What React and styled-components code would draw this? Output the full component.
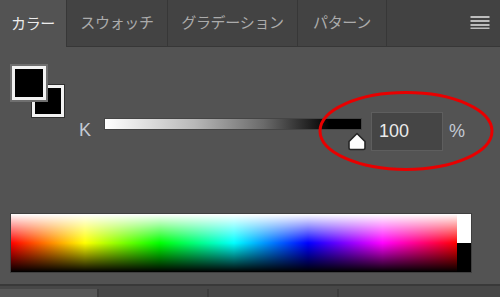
import React from "react";
import styled, { createGlobalStyle } from "styled-components";

const GlobalStyle = createGlobalStyle`
    html, body {
        margin: 0;
        padding: 0;
        background: #535353;
        width: 500px;
        height: 297px;
        overflow: hidden;
    }
`;

const Panel = styled.div`
    position: relative;
    width: 500px;
    height: 297px;
    display: flex;
    flex-direction: column;
    background: #535353;
    font-family: "Noto Sans CJK JP", "Liberation Sans", sans-serif;
`;

const TabBar = styled.div`
    height: 47px;
    display: flex;
    background: #424242;
    flex-shrink: 0;
`;

const Tab = styled.div`
    width: ${({ w }) => w}px;
    box-sizing: border-box;
    display: flex;
    align-items: center;
    justify-content: center;
    padding-bottom: 3px;
    font-size: 15px;
    letter-spacing: -0.3px;
    color: ${({ active }) => (active ? "#ececec" : "#ababab")};
    background: ${({ active }) => (active ? "#535353" : "#434343")};
    border-right: 1px solid #373737;
    border-bottom: ${({ active }) => (active ? "none" : "1px solid #373737")};
`;

const TabFill = styled.div`
    flex: 1;
    display: flex;
    align-items: center;
    justify-content: flex-end;
    padding: 0 10px 3px 0;
    border-bottom: 1px solid #373737;
`;

const Body = styled.div`
    flex: 1;
    display: flex;
    flex-direction: column;
    padding: 16px 0 0 10px;
`;

const Controls = styled.div`
    display: grid;
    grid-template-columns: 54px auto;
    grid-template-rows: 49px 39px;
`;

const Swatches = styled.div`
    grid-row: 1 / 3;
    grid-column: 1;
    position: relative;
    width: 54px;
    height: 55px;
`;

const Square = styled.div`
    position: absolute;
    left: ${({ x }) => x}px;
    top: ${({ y }) => y}px;
    width: ${({ size }) => size}px;
    height: ${({ size }) => size}px;
    box-sizing: border-box;
    background: #000;
    border: ${({ front }) => (front ? "3px" : "3px")} solid #f2f2f2;
    box-shadow: 0 0 0 ${({ front }) => (front ? "2px #6f6f6f" : "1px #303030")};
`;

const SliderRow = styled.div`
    grid-row: 2;
    grid-column: 2;
    display: flex;
    align-items: flex-start;
    padding-left: 15px;
`;

const Label = styled.span`
    font-family: "Liberation Sans", Arial, sans-serif;
    font-size: 18px;
    color: ${({ dim }) => (dim ? "#c4cad4" : "#d4d4d4")};
    line-height: 39px;
    margin-top: ${({ drop }) => drop || 0}px;
`;

const Slider = styled.div`
    position: relative;
    width: 256px;
    height: 39px;
    margin-left: 14px;
`;

const Track = styled.div`
    position: absolute;
    left: 0;
    right: 0;
    top: 7px;
    height: 10px;
    background: linear-gradient(to right, #ffffff 0%, #b8b8b8 35%, #6a6a6a 62%, #000 88%, #000 100%);
    box-shadow: 0 0 0 1px #454545;
`;

const Thumb = styled.svg`
    position: absolute;
    top: 20px;
`;

const ValueBox = styled.div`
    width: 72px;
    height: 39px;
    box-sizing: border-box;
    margin-left: 10px;
    background: #454545;
    border: 1px solid #5e5e5e;
    padding-left: 7px;
    font-family: "Liberation Sans", Arial, sans-serif;
    font-size: 18px;
    line-height: 37px;
    color: #eaeaea;
`;

const Percent = styled(Label)`
    margin-left: 6px;
`;

const Spectrum = styled.div`
    margin-top: 62px;
    width: 462px;
    height: 60px;
    box-sizing: border-box;
    display: flex;
    border: 1px solid #3f3f3f;
`;

const Hue = styled.div`
    flex: 1;
    background:
        linear-gradient(to bottom, #fff 0%, rgba(255, 255, 255, 0) 50%, rgba(0, 0, 0, 0) 50%, #000 100%),
        linear-gradient(to right, #f00 0%, #ff0 16.6%, #0f0 33.3%, #0ff 50%, #00f 66.6%, #f0f 83.3%, #f00 100%);
`;

const Extremes = styled.div`
    width: 14px;
    display: flex;
    flex-direction: column;
`;

const Chip = styled.div`
    flex: 1;
    background: ${({ c }) => c};
`;

const Footer = styled.div`
    height: 11px;
    flex-shrink: 0;
    display: flex;
    flex-direction: column;
    border-top: 2px solid #393939;
    background: #474747;
`;

const FooterTabs = styled.div`
    margin-top: 3px;
    flex: 1;
    display: flex;
`;

const FooterTab = styled.div`
    width: ${({ w }) => w}px;
    background: ${({ active }) => (active ? "#575757" : "#474747")};
    border-right: 2px solid #3c3c3c;
`;

const Highlight = styled.svg`
    position: absolute;
    left: 316px;
    top: 89px;
`;

const MenuIcon = () => (
    <svg width="20" height="14" viewBox="0 0 20 14">
        {[1, 5, 9, 12.5].map((y) => (
            <rect key={y} x="0.5" y={y} width="19" height="2" fill="#bdbdbd" />
        ))}
    </svg>
);

const tabs = [
    { label: "カラー", w: 67, active: true },
    { label: "スウォッチ", w: 101 },
    { label: "グラデーション", w: 130 },
    { label: "パターン", w: 89 },
];

const App = () => {
    const value = 100;
    const thumbLeft = 4 + (value / 100) * (256 - 8) - 10;

    return (
        <>
            <GlobalStyle />
            <Panel>
                <TabBar>
                    {tabs.map((t) => (
                        <Tab key={t.label} w={t.w} active={t.active}>
                            {t.label}
                        </Tab>
                    ))}
                    <TabFill>
                        <MenuIcon />
                    </TabFill>
                </TabBar>
                <Body>
                    <Controls>
                        <Swatches>
                            <Square x={22} y={22} size={32} />
                            <Square front x={2} y={3} size={34} />
                        </Swatches>
                        <SliderRow>
                            <Label dim drop={-1}>K</Label>
                            <Slider>
                                <Track />
                                <Thumb
                                    width="20"
                                    height="19"
                                    viewBox="0 0 20 19"
                                    style={{ left: thumbLeft }}
                                >
                                    <path
                                        d="M10 1.5 L18 9.5 L18 16 Q18 17.5 16.5 17.5 L3.5 17.5 Q2 17.5 2 16 L2 9.5 Z"
                                        fill="#ffffff"
                                        stroke="#262626"
                                        strokeWidth="1.6"
                                        strokeLinejoin="round"
                                    />
                                </Thumb>
                            </Slider>
                            <ValueBox>{value}</ValueBox>
                            <Percent dim>%</Percent>
                        </SliderRow>
                    </Controls>
                    <Spectrum>
                        <Hue />
                        <Extremes>
                            <Chip c="#ffffff" />
                            <Chip c="#000000" />
                        </Extremes>
                    </Spectrum>
                </Body>
                <Footer>
                    <FooterTabs>
                        <FooterTab active w={97} />
                        <FooterTab w={108} />
                        <FooterTab w={128} />
                    </FooterTabs>
                </Footer>
                <Highlight width="180" height="84" viewBox="0 0 180 84">
                    <ellipse
                        cx="90"
                        cy="42"
                        rx="86"
                        ry="38.5"
                        fill="none"
                        stroke="#e80000"
                        strokeWidth="3"
                    />
                </Highlight>
            </Panel>
        </>
    );
};

export default App;
